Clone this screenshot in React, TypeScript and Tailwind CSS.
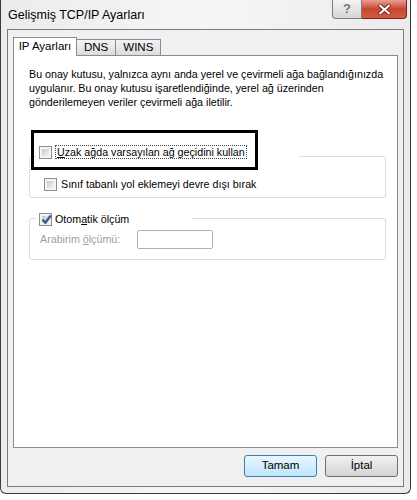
import { ReactNode } from "react";

function CheckBox({ checked = false }: { checked?: boolean }) {
  return (
    <div className="w-[13px] h-[13px] shrink-0 border border-[#8f8f8f] bg-[#f4f4f4] p-[2px]">
      <div className="relative w-full h-full bg-linear-to-br from-[#c6cad0] to-[#f4f4f4]">
        {checked && (
          <svg
            viewBox="0 0 9 9"
            className="absolute -left-[1px] -top-[2px] w-[11px] h-[11px]"
          >
            <path
              d="M1.2 4.6 L3.6 7.2 L8 1.2"
              fill="none"
              stroke="#3d5593"
              strokeWidth="1.9"
            />
          </svg>
        )}
      </div>
    </div>
  );
}

function Tab({ label, active = false }: { label: string; active?: boolean }) {
  return active ? (
    <div className="relative z-10 -mb-px h-[19px] w-[64px] border border-b-0 border-[#898c95] bg-white flex items-center justify-center text-[11.5px] text-black">
      {label}
    </div>
  ) : (
    <div className="h-[16px] border border-l-0 border-b-0 border-[#898c95] bg-linear-to-b from-[#f3f3f3] to-[#dcdcdc] flex items-center justify-center px-[7px] text-[11.5px] text-black">
      {label}
    </div>
  );
}

function WinButton({
  children,
  primary = false,
}: {
  children: ReactNode;
  primary?: boolean;
}) {
  return (
    <button
      className={
        primary
          ? "w-[73px] h-[22px] rounded-[3px] border border-[#3c7fb1] bg-linear-to-b from-[#eaf6fd] to-[#bee6fd] text-[11.5px] text-black"
          : "w-[73px] h-[22px] rounded-[3px] border border-[#707070] bg-linear-to-b from-[#f2f2f2] to-[#d4d4d4] text-[11.5px] text-black"
      }
    >
      {children}
    </button>
  );
}

export default function App() {
  return (
    <div className="w-[417px] h-[500px] bg-white font-['Liberation_Sans',Arial,sans-serif]">
      <div className="w-[411px] h-[494px] border border-t-0 border-[#3a3a3a] rounded-b-[6px] bg-linear-to-r from-[#ececec] via-[#f6f6f6] to-[#ebebeb] flex flex-col">
        {/* title bar */}
        <div className="h-[29px] flex items-start justify-between">
          <span className="pl-[7px] pt-[6px] text-[12.5px] text-black">
            Gelişmiş TCP/IP Ayarları
          </span>
          <div className="flex mr-[3px]">
            <div className="w-[30px] h-[19px] rounded-bl-[4px] border border-t-0 border-[#7d7d7d] bg-linear-to-b from-[#f4f4f4] to-[#d6d6d6] flex items-center justify-center text-[13px] font-bold text-[#777]">
              ?
            </div>
            <div className="w-[45px] h-[19px] rounded-br-[4px] border border-l-0 border-t-0 border-[#6a2a1e] bg-linear-to-b from-[#e6a093] via-[#c8452e] to-[#d65a40] flex items-center justify-center">
              <svg viewBox="0 0 12 10" className="w-[13px] h-[11px]">
                <path
                  d="M2 1.5 L10 8.5 M10 1.5 L2 8.5"
                  stroke="#5a1a10"
                  strokeWidth="3.4"
                  strokeLinecap="square"
                />
                <path
                  d="M2 1.5 L10 8.5 M10 1.5 L2 8.5"
                  stroke="#ffffff"
                  strokeWidth="2"
                  strokeLinecap="square"
                />
              </svg>
            </div>
          </div>
        </div>

        {/* client area */}
        <div className="ml-[6px] w-[397px] h-[458px] border border-[#7b7b7b] bg-[#f0f0f0] flex flex-col">
          <div className="pt-[7px] pl-[5px] flex items-end">
            <Tab label="IP Ayarları" active />
            <Tab label="DNS" />
            <Tab label="WINS" />
          </div>

          <div className="relative ml-[5px] w-[385px] h-[393px] border border-[#898c95] bg-white text-[10.7px] text-black">
            <p className="ml-[15px] mt-[11px] leading-[14px]">
              Bu onay kutusu, yalnızca aynı anda yerel ve çevirmeli ağa bağlandığınızda
              <br />
              uygulanır. Bu onay kutusu işaretlendiğinde, yerel ağ üzerinden
              <br />
              gönderilemeyen veriler çevirmeli ağa iletilir.
            </p>

            {/* group 1 */}
            <div className="ml-[15px] mt-[47px] w-[357px] h-[42px] border border-[#d5dfe5] rounded-[3px]">
              <div className="-mt-[12px] ml-[6px] w-[263px] h-[14px] bg-white pl-[3px] flex items-center gap-[3px]">
                <CheckBox />
                <span className="border border-dotted border-[#444] px-[1px] leading-[12px]">
                  <span className="underline">U</span>zak ağda varsayılan ağ geçidini kullan
                </span>
              </div>
              <div className="mt-[17px] ml-[14px] flex items-center gap-[4px]">
                <CheckBox />
                <span>Sınıf tabanlı yol eklemeyi devre dışı bırak</span>
              </div>
            </div>

            {/* group 2 */}
            <div className="ml-[15px] mt-[20px] w-[357px] h-[42px] border border-[#d5dfe5] rounded-[3px]">
              <div className="-mt-[6px] ml-[6px] w-[156px] h-[13px] bg-white pl-[3px] flex items-center gap-[3px]">
                <CheckBox checked />
                <span>
                  Otom<span className="underline">a</span>tik ölçüm
                </span>
              </div>
              <div className="mt-[4px] ml-[10px] h-[19px] flex items-center">
                <span className="w-[97px] text-[#a0a0a0]">
                  Arabirim <span className="underline">ö</span>lçümü:
                </span>
                <div className="w-[76px] h-[19px] border border-[#adb2b5] rounded-[2px] bg-white" />
              </div>
            </div>

            {/* highlight annotation */}
            <div className="absolute left-[17px] top-[74px] w-[227px] h-[40px] border-[3px] border-black" />
          </div>

          <div className="ml-[5px] mt-[7px] w-[385px] flex justify-end gap-[8px]">
            <WinButton primary>Tamam</WinButton>
            <WinButton>İptal</WinButton>
          </div>
        </div>
      </div>
    </div>
  );
}
